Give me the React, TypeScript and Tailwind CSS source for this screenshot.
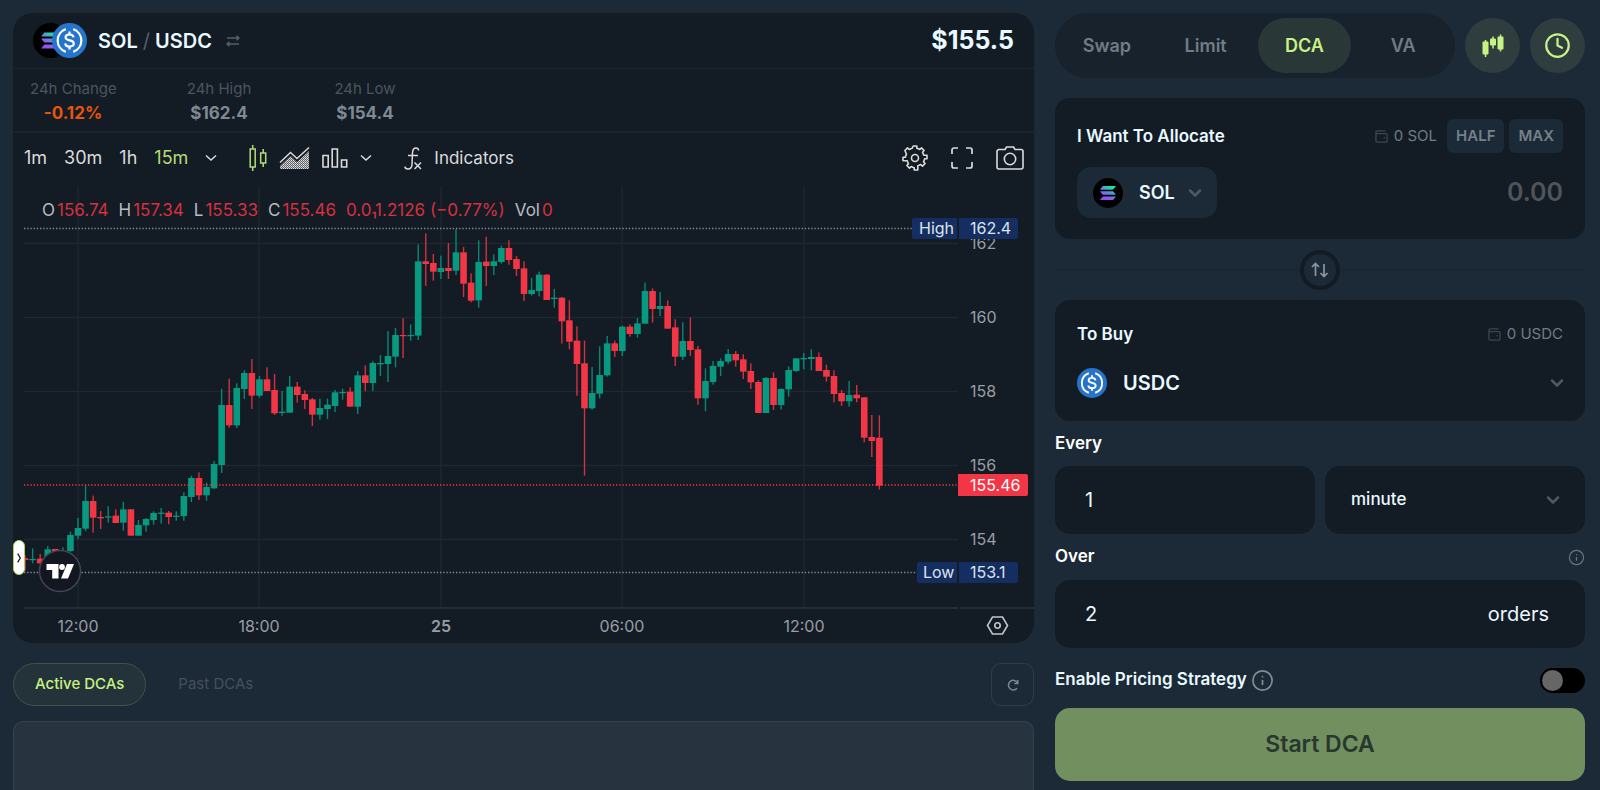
import React, { useState } from 'react'
import { ChevronDown, Clock, Info } from 'lucide-react'
import clsx from 'clsx'

// [isUp, high, bodyTop, bodyBottom, low], in thirds of a chart unit below the segment base
type Bar = [number, number, number, number, number]

interface Segment {
  start: number
  base: number
  bars: Bar[]
}

const segments: Segment[] = [
  {
    start: -7,
    base: 459,
    bars: [
      [0, 645, 655, 660, 692], [1, 625, 657, 660, 670], [0, 642, 656, 670, 672], [1, 618, 628, 656, 656],
      [0, 627, 627, 650, 650], [1, 622, 633, 650, 650], [1, 575, 585, 633, 636], [1, 534, 564, 587, 597],
      [1, 434, 483, 566, 573], [0, 467, 483, 533, 578], [0, 513, 531, 535, 567], [1, 499, 529, 532, 548],
      [0, 508, 527, 549, 549], [1, 485, 508, 548, 572], [0, 508, 508, 587, 587], [1, 540, 555, 587, 587],
      [1, 534, 537, 556, 575], [1, 514, 519, 540, 554], [1, 504, 518, 521, 551], [0, 513, 518, 531, 553],
      [1, 514, 527, 530, 542], [1, 457, 468, 528, 542], [1, 407, 414, 471, 486], [0, 397, 414, 466, 480],
      [1, 428, 441, 466, 482], [1, 363, 372, 445, 447], [1, 146, 195, 375, 399], [0, 116, 195, 256, 263],
      [1, 130, 144, 256, 264], [1, 91, 99, 147, 177], [0, 57, 99, 167, 207], [1, 108, 118, 167, 173],
      [0, 82, 118, 153, 153], [0, 102, 150, 220, 225], [1, 153, 215, 219, 227], [1, 108, 140, 218, 218],
      [0, 126, 140, 165, 188], [0, 151, 162, 180, 207], [0, 174, 178, 224, 258], [1, 176, 204, 224, 239],
      [1, 176, 194, 207, 237], [1, 150, 157, 198, 216], [1, 146, 156, 159, 179], [0, 142, 155, 200, 200],
      [1, 93, 106, 200, 222], [0, 76, 106, 129, 153], [1, 63, 69, 129, 153], [1, 45, 69, 73, 108],
    ],
  },
  {
    start: 41,
    base: 69,
    bars: [
      [1, 363, 438, 462, 516], [1, 354, 375, 440, 472], [0, 325, 375, 378, 444], [1, 343, 375, 378, 392],
      [1, 103, 154, 377, 390], [0, 70, 154, 162, 228], [0, 132, 159, 185, 212], [1, 137, 174, 186, 207],
      [0, 99, 174, 183, 207], [1, 57, 127, 182, 195], [0, 111, 127, 221, 261], [0, 190, 218, 272, 277],
      [1, 91, 156, 271, 293], [0, 80, 155, 168, 228], [1, 133, 154, 168, 195], [1, 107, 114, 156, 161],
      [0, 91, 114, 150, 164], [0, 138, 147, 177, 198], [0, 154, 175, 252, 273], [1, 204, 240, 252, 257],
      [1, 185, 194, 243, 259], [0, 193, 194, 270, 270], [1, 237, 263, 267, 293], [0, 261, 263, 334, 401],
      [0, 271, 331, 395, 418], [0, 349, 392, 462, 557], [0, 392, 460, 595, 797], [1, 471, 549, 595, 599],
      [1, 409, 495, 551, 565], [1, 378, 400, 496, 500], [0, 392, 400, 423, 441], [1, 347, 350, 423, 438],
      [0, 343, 350, 372, 380],
    ],
  },
  {
    start: 74,
    base: 219,
    bars: [
      [1, 174, 190, 222, 233], [1, 68, 93, 191, 191], [0, 85, 93, 147, 188], [1, 96, 138, 147, 168],
      [0, 121, 138, 206, 206], [0, 178, 202, 290, 318], [1, 187, 243, 290, 300], [0, 172, 243, 270, 288],
      [0, 258, 268, 415, 434], [1, 325, 363, 415, 454], [1, 303, 318, 366, 374], [1, 295, 303, 320, 348],
      [1, 267, 282, 305, 312], [0, 273, 282, 301, 320], [0, 283, 298, 335, 357], [0, 310, 333, 367, 387],
      [0, 361, 366, 459, 459], [1, 351, 354, 459, 459], [0, 337, 354, 435, 450], [1, 385, 387, 435, 449],
      [1, 319, 330, 388, 410], [1, 294, 295, 333, 336], [1, 279, 294, 298, 328], [1, 268, 291, 297, 331],
      [0, 277, 291, 333, 333], [0, 314, 330, 350, 365], [0, 331, 348, 402, 427], [0, 390, 399, 424, 438],
      [1, 363, 405, 424, 440], [0, 375, 404, 415, 427], [0, 412, 412, 533, 547], [0, 465, 531, 543, 591],
      [0, 466, 533, 677, 689],
    ],
  },
]

const priceTicks = [
  { label: '162', y: 56 },
  { label: '160', y: 130 },
  { label: '158', y: 204 },
  { label: '156', y: 278 },
  { label: '154', y: 352 },
]

const timeTicks = [
  { label: '12:00', x: 65 },
  { label: '18:00', x: 246 },
  { label: '25', x: 428, bold: true },
  { label: '06:00', x: 609 },
  { label: '12:00', x: 791 },
]

function SolIcon({ id, className }: { id: string; className?: string }) {
  return (
    <svg viewBox="0 0 32 32" className={className} aria-hidden="true">
      <defs>
        <linearGradient id={id} x1="10" y1="25" x2="20" y2="8" gradientUnits="userSpaceOnUse">
          <stop offset="0" stopColor="#a640f8" />
          <stop offset="0.35" stopColor="#8a5cf0" />
          <stop offset="0.65" stopColor="#4f9bd2" />
          <stop offset="0.85" stopColor="#1fd8ae" />
          <stop offset="1" stopColor="#14f1a0" />
        </linearGradient>
      </defs>
      <circle cx="16" cy="16" r="16" fill="#000" />
      <g fill={`url(#${id})`}>
        <path d="M10.900 8.600h12.700c.5 0 .7.500.4.800l-2.500 2.700c-.2.200-.4.300-.7.300H8.300c-.5 0-.7-.5-.4-.8l2.400-2.700c.1-.2.300-.3.600-.3z" />
        <path d="M8.300 14.100h12.500c.3 0 .5.100.7.300l2.500 2.700c.3.300.1.800-.4.800H10.900c-.3 0-.5-.1-.7-.3l-2.300-2.700c-.3-.3-.1-.8.400-.8z" />
        <path d="M10.900 19.600h12.700c.5 0 .7.500.4.800l-2.500 2.700c-.2.200-.4.300-.7.300H8.300c-.5 0-.7-.5-.4-.8l2.400-2.700c.1-.2.300-.3.600-.3z" />
      </g>
    </svg>
  )
}

function UsdcIcon({ className }: { className?: string }) {
  return (
    <svg viewBox="0 0 32 32" className={className} aria-hidden="true">
      <circle cx="16" cy="16" r="16" fill="#2775ca" />
      <g fill="none" stroke="#fff" strokeWidth="2">
        <path d="M12.600 5.600a11 11 0 0 0 0 20.800" />
        <path d="M19.400 5.600a11 11 0 0 1 0 20.800" />
        <path d="M16 7.800v2.400M16 21.800v2.400" />
        <path d="M19.700 13.200c-.2-1.800-1.600-2.700-3.700-2.700s-3.600 1-3.600 2.600c0 1.900 1.700 2.400 3.700 2.800 2.200.4 3.800 1 3.800 2.900 0 1.700-1.600 2.700-3.900 2.700s-3.800-1-3.900-2.900" />
      </g>
    </svg>
  )
}

function SwitchIcon() {
  return (
    <svg width="14" height="12" viewBox="0 0 14 12" fill="none" stroke="#56606a" strokeWidth="1.500" aria-hidden="true">
      <path d="M1 3h12M10.500.700 13 3l-2.500 2.300M13 9H1M3.500 6.700 1 9l2.500 2.300" />
    </svg>
  )
}

function WalletIcon() {
  return (
    <svg width="13" height="13" viewBox="0 0 14 14" fill="none" stroke="#3d454e" strokeWidth="1.400" aria-hidden="true">
      <path d="M1 2.300V11.500a1.500 1.500 0 0 0 1.500 1.500h9a1.500 1.500 0 0 0 1.500-1.500V5a1.200 1.200 0 0 0-1.200-1.200H2.300A1.300 1.300 0 0 1 2.300 1H11.500" />
      <path d="M10 7.500v1.600" />
    </svg>
  )
}

function ToolbarChevron() {
  return (
    <svg width="12" height="8" viewBox="0 0 12 8" fill="none" stroke="#dbdbdb" strokeWidth="1.500" aria-hidden="true">
      <path d="M1 1.500 6 6l5-4.500" />
    </svg>
  )
}

function CandlesIcon() {
  return (
    <svg width="18" height="26" viewBox="0 0 18 26" fill="none" stroke="#b5dc7a" strokeWidth="1.500" aria-hidden="true">
      <path d="M1.200 4h5v18h-5zM3.700 0v4M3.700 22v4M11.700 8h5v10h-5zM14.200 4v4M14.200 18v4" />
    </svg>
  )
}

function AreaIcon() {
  return (
    <svg width="31" height="24" viewBox="0 0 31 24" aria-hidden="true">
      <defs>
        <pattern id="area-dots" width="2" height="2" patternUnits="userSpaceOnUse">
          <rect width="2" height="2" fill="#5f6267" />
          <rect width="1" height="1" fill="#e4e4e4" />
          <rect x="1" y="1" width="1" height="1" fill="#c4c4c4" />
        </pattern>
      </defs>
      <path d="M1 20 11.500 10l6.500 6L30 5v18H1z" fill="url(#area-dots)" />
      <path d="M1 16.500 11.500 6.500l6.500 6L30 1.500" fill="none" stroke="#dbdbdb" strokeWidth="1.500" />
    </svg>
  )
}

function ColumnsIcon() {
  return (
    <svg width="26" height="20" viewBox="0 0 26 20" fill="none" stroke="#dbdbdb" strokeWidth="1.600" aria-hidden="true">
      <path d="M1 7.500h5.200V19H1zM10.200 1h5.200v18h-5.200zM19.500 12h5.200v7h-5.200z" />
    </svg>
  )
}

function FunctionIcon() {
  return (
    <svg width="18" height="23" viewBox="0 0 18 23" fill="none" stroke="#dbdbdb" strokeWidth="1.500" aria-hidden="true">
      <path d="M14.500 3.500C14.500 1.800 13.500 1 12 1 9.500 1 8.700 3 8.500 5.500L8 17.500C7.800 20.500 6.500 22 4 22 2 22 1 21.200 1 19.500M4 8.500H14M10.500 15.500l6.500 6.500M17 15.500l-6.500 6.500" />
    </svg>
  )
}

function GearIcon() {
  return (
    <svg width="26" height="26" viewBox="0 0 26 26" fill="none" stroke="#dbdbdb" strokeWidth="1.600" strokeLinejoin="round" aria-hidden="true">
      <path d="M11.200 1h3.600v2.300c1.100.3 2.100.7 3 1.200l1.700-1.600 2.600 2.600-1.600 1.700c.5.900 1 1.900 1.200 3H25v3.600h-2.300c-.3 1.100-.7 2.100-1.200 3l1.600 1.700-2.600 2.600-1.700-1.600c-.9.500-1.900 1-3 1.200V25h-3.600v-2.300c-1.100-.3-2.100-.7-3-1.200l-1.700 1.600-2.600-2.600 1.600-1.700c-.5-.9-1-1.900-1.200-3H1v-3.600h2.300c.3-1.100.7-2.100 1.200-3L2.900 5.500l2.600-2.600 1.700 1.600c.9-.5 1.900-1 3-1.200z" />
      <circle cx="13" cy="13" r="3.500" />
    </svg>
  )
}

function FullscreenIcon() {
  return (
    <svg width="22" height="22" viewBox="0 0 22 22" fill="none" stroke="#dbdbdb" strokeWidth="1.700" aria-hidden="true">
      <path d="M1 7V3a2 2 0 0 1 2-2h4M15 1h4a2 2 0 0 1 2 2v4M21 15v4a2 2 0 0 1-2 2h-4M7 21H3a2 2 0 0 1-2-2v-4" />
    </svg>
  )
}

function CameraIcon() {
  return (
    <svg width="28" height="24" viewBox="0 0 28 24" fill="none" stroke="#dbdbdb" strokeWidth="1.600" aria-hidden="true">
      <path d="M9 3.500 10.500 1h7L19 3.500h6a2 2 0 0 1 2 2V21a2 2 0 0 1-2 2H3a2 2 0 0 1-2-2V5.500a2 2 0 0 1 2-2z" />
      <circle cx="14" cy="13" r="5.700" />
    </svg>
  )
}

function SolidCandlesIcon() {
  return (
    <svg width="22" height="24" viewBox="0 0 22 24" fill="#c7f284" aria-hidden="true">
      <rect x="0.500" y="7.500" width="6" height="13" rx="1" />
      <rect x="2.800" y="6" width="1.500" height="17" />
      <rect x="8" y="4.500" width="6" height="7" rx="1" />
      <rect x="10.300" y="2.500" width="1.500" height="12" />
      <rect x="15.500" y="2.500" width="6" height="13" rx="1" />
      <rect x="17.800" y="0.500" width="1.500" height="17" />
    </svg>
  )
}

function PriceChart() {
  return (
    <svg viewBox="0 0 1021 456" className="block w-full" fontSize="16" role="img" aria-label="SOL/USDC price chart">
      <g stroke="#1f2730" strokeWidth="1.400">
        {timeTicks.map((t) => (
          <line key={t.x} x1={t.x} x2={t.x} y1="0" y2="420" />
        ))}
        {priceTicks.map((t) => (
          <line key={t.label} x1="11" x2="945" y1={t.y + 0.5} y2={t.y + 0.5} />
        ))}
      </g>
      <path d="M11 421h934M947 421h74" stroke="#262d37" strokeWidth="2" />

      <clipPath id="plot">
        <rect x="11" y="0" width="934" height="420" />
      </clipPath>
      <g clipPath="url(#plot)">
        {segments.map((s) =>
          s.bars.map(([up, high, top, bottom, low], i) => {
            const x = 65 + (s.start + i) * 7.56
            return (
              <g key={s.start + i} fill={up ? '#089981' : '#f23645'}>
                <rect x={x - 0.7} y={(s.base + high) / 3} width="1.400" height={(low - high) / 3} opacity="0.85" />
                <rect x={x - 3.3} y={(s.base + top) / 3} width="6.600" height={Math.max(1.2, (bottom - top) / 3)} />
              </g>
            )
          })
        )}
      </g>

      <g strokeWidth="1.300" strokeDasharray="1.300 1.900">
        <path d="M11 41.500h888M11 385.500h894" stroke="#8a8f98" />
        <path d="M11 298h934" stroke="#f23645" />
      </g>

      <g fill="#9a9da5">
        {priceTicks.map((t) => (
          <text key={t.label} x="957" y={t.y + 6}>
            {t.label}
          </text>
        ))}
        {timeTicks.map((t) => (
          <text key={t.x} x={t.x} y="445" textAnchor="middle" fontWeight={t.bold ? 600 : 400}>
            {t.label}
          </text>
        ))}
      </g>

      <g fill="#142e61">
        <path d="M901 31h43v21h-43a2 2 0 0 1-2-2V33a2 2 0 0 1 2-2zM946 31h57a2 2 0 0 1 2 2v17a2 2 0 0 1-2 2h-57z" />
        <path d="M906 375h38v21h-38a2 2 0 0 1-2-2v-17a2 2 0 0 1 2-2zM946 375h57a2 2 0 0 1 2 2v17a2 2 0 0 1-2 2h-57z" />
      </g>
      <path d="M945 287h68a2 2 0 0 1 2 2v18a2 2 0 0 1-2 2h-68z" fill="#f23645" />
      <g fill="#dfe3ea">
        <text x="906" y="47">High</text>
        <text x="957" y="47">162.4</text>
        <text x="910" y="391">Low</text>
        <text x="957" y="391">153.1</text>
        <text x="957" y="304" fill="#fff">155.46</text>
      </g>

      <g fill="none" stroke="#c3c5ca" strokeWidth="1.600">
        <path d="M979.500 430h10l5 8.500-5 8.500h-10l-5-8.500z" />
        <circle cx="984.500" cy="438.500" r="2.700" />
      </g>

      <circle cx="47" cy="384" r="20.500" fill="#131722" stroke="#434651" strokeWidth="1.500" />
      <g fill="#fff">
        <path d="M33.500 377h12v14.500h-6.300V383h-5.700z" />
        <circle cx="49" cy="380" r="2.900" />
        <path d="M54 377h7l-6 14.500h-7z" />
      </g>
    </svg>
  )
}

function LegendValue({ label, children }: { label: string; children: React.ReactNode }) {
  return (
    <span>
      <span className="mr-0.5 text-[#b8bbc3]">{label}</span>
      {children}
    </span>
  )
}

function Stat({ label, value, className = 'text-[#7e8a93]' }: { label: string; value: string; className?: string }) {
  return (
    <div className="w-[86px] whitespace-nowrap">
      <dt className="text-[15px] leading-6 text-[#4b555f]">{label}</dt>
      <dd className={clsx('text-[17px] leading-6 font-bold', className)}>{value}</dd>
    </div>
  )
}

function ChartCard() {
  return (
    <section className="relative overflow-hidden rounded-[20px] bg-[#131b24]">
      <header className="flex h-14 items-center border-b border-[#1d2731] px-5">
        <SolIcon id="sol-pair" className="size-[35px]" />
        <UsdcIcon className="-ml-4 size-[35px]" />
        <h1 className="ml-[11px] text-xl font-semibold text-[#e8f9ff]">
          SOL <span className="font-normal text-[#56606a]">/</span> USDC
        </h1>
        <button aria-label="Switch pair" className="ml-3.5">
          <SwitchIcon />
        </button>
        <span className="ml-auto text-[25px] font-bold text-[#e8f9ff]">$155.5</span>
      </header>

      <dl className="flex h-16 items-center gap-[60px] border-b-2 border-[#1a232d] pt-0.5 pl-[17px] text-center">
        <Stat label="24h Change" value="-0.12%" className="text-[#e8540c]" />
        <Stat label="24h High" value="$162.4" />
        <Stat label="24h Low" value="$154.4" />
      </dl>

      <div className="flex h-[54px] items-center pr-2.5 pb-1 pl-[11px] text-lg text-[#dbdbdb]">
        <div className="flex items-center gap-[17px]">
          <button>1m</button>
          <button>30m</button>
          <button>1h</button>
          <button className="text-[#b5dc7a]">15m</button>
          <button aria-label="More intervals"><ToolbarChevron /></button>
        </div>
        <div className="ml-8 flex items-center gap-3">
          <button aria-label="Candles"><CandlesIcon /></button>
          <button aria-label="Area"><AreaIcon /></button>
          <button aria-label="Columns"><ColumnsIcon /></button>
          <button aria-label="More chart types"><ToolbarChevron /></button>
        </div>
        <button className="ml-8 flex items-center gap-3 text-[17px]">
          <FunctionIcon />
          Indicators
        </button>
        <div className="ml-auto flex items-center gap-[23px]">
          <button aria-label="Chart settings"><GearIcon /></button>
          <button aria-label="Fullscreen"><FullscreenIcon /></button>
          <button aria-label="Take a snapshot"><CameraIcon /></button>
        </div>
      </div>

      <div className="relative">
        <PriceChart />
        <div className="absolute top-[11px] left-[29px] flex gap-2.5 text-[17px] leading-6 whitespace-nowrap text-[#d8303f]">
          <LegendValue label="O">156.74</LegendValue>
          <LegendValue label="H">157.34</LegendValue>
          <LegendValue label="L">155.33</LegendValue>
          <LegendValue label="C">155.46</LegendValue>
          <span>0.0₁1.2126 (−0.77%)</span>
          <LegendValue label="Vol">0</LegendValue>
        </div>
        <button
          aria-label="Show drawing tools"
          className="absolute top-[353px] left-0 flex h-[35px] w-3 items-center justify-center rounded-md border border-[#a5d35f] bg-white"
        >
          <svg width="4" height="10" viewBox="0 0 4 10" fill="none" stroke="#131722" strokeWidth="1.300" aria-hidden="true">
            <path d="M.7.700 3.300 5 .7 9.300" />
          </svg>
        </button>
      </div>
    </section>
  )
}

function Orders() {
  return (
    <>
      <div className="mt-5 flex items-center justify-between">
        <div className="flex text-[15px]">
          <button className="h-[43px] rounded-full border border-[#435443] bg-[#24323a] px-[21px] font-medium text-[#c7f284]">
            Active DCAs
          </button>
          <button className="h-[43px] px-8 text-[#45505b]">Past DCAs</button>
        </div>
        <button
          aria-label="Refresh"
          className="flex size-[43px] items-center justify-center rounded-[10px] border border-[#303c49]"
        >
          <svg width="12" height="12" viewBox="0 0 12 12" fill="none" stroke="#7c868f" strokeWidth="1.500" aria-hidden="true">
            <path d="M10 9.200A4.800 4.800 0 1 1 10.300 3.500M10.800 1v3.500H7.300" />
          </svg>
        </button>
      </div>
      <div className="mt-[15px] flex-1 rounded-t-[10px] border border-b-0 border-[#354350] bg-[#27343f]" />
    </>
  )
}

const tabs = ['Swap', 'Limit', 'DCA', 'VA']

function DcaPanel() {
  const [tab, setTab] = useState('DCA')

  return (
    <aside className="flex flex-col pb-2">
      <div className="flex items-center gap-2.5">
        <nav className="flex h-[65px] flex-1 gap-[5px] rounded-full bg-[#18222d] p-[5px]">
          {tabs.map((t) => (
            <button
              key={t}
              onClick={() => setTab(t)}
              className={clsx(
                'flex-1 rounded-full text-lg font-semibold',
                t === tab ? 'bg-[#293736] text-[#c7f284]' : 'text-[#707b85]'
              )}
            >
              {t}
            </button>
          ))}
        </nav>
        <button aria-label="Chart" className="flex size-[55px] items-center justify-center rounded-full bg-[#2f3d3e]">
          <SolidCandlesIcon />
        </button>
        <button aria-label="History" className="flex size-[55px] items-center justify-center rounded-full bg-[#2f3d3e] text-[#c7f284]">
          <Clock size={27} strokeWidth={2} />
        </button>
      </div>

      <section className="mt-5 rounded-[15px] bg-[#131b24] px-[22px] py-[21px]">
        <div className="flex items-center">
          <label htmlFor="allocate" className="text-[17px] leading-7 font-semibold text-[#e8f9ff]">
            I Want To Allocate
          </label>
          <span className="ml-auto flex items-center gap-1.5 text-[15px] text-[#707b85]">
            <WalletIcon />0 SOL
          </span>
          <button className="ml-2.5 h-[34px] rounded-md bg-[#1c2936] px-[9px] text-[15px] font-semibold text-[#74808a]">HALF</button>
          <button className="ml-[5px] h-[34px] rounded-md bg-[#1c2936] px-[9px] text-[15px] font-semibold text-[#74808a]">MAX</button>
        </div>
        <div className="mt-3.5 flex items-center justify-between">
          <button className="flex h-[51px] shrink-0 items-center rounded-[14px] bg-[#1c2936] px-4 text-lg font-semibold text-[#e8f9ff]">
            <SolIcon id="sol-select" className="size-[30px]" />
            <span className="ml-4">SOL</span>
            <ChevronDown size={20} strokeWidth={3} className="ml-2.5 -mr-1 text-[#4f5963]" />
          </button>
          <input
            id="allocate"
            placeholder="0.00"
            className="w-full min-w-0 bg-transparent text-right text-[25px] font-semibold outline-none placeholder:text-[#4f545b]"
          />
        </div>
      </section>

      <div className="flex h-[61px] items-center">
        <div className="h-px flex-1 bg-[#192430]" />
        <button aria-label="Switch tokens" className="flex size-10 items-center justify-center rounded-full border-4 border-[#131b24]">
          <svg width="18" height="16" viewBox="0 0 18 16" fill="none" stroke="#8b969f" strokeWidth="1.700" aria-hidden="true">
            <path d="M4.500 14V1.500M1 5l3.500-3.500L8 5M13 2v12.500M9.500 11l3.500 3.500 3.500-3.500" />
          </svg>
        </button>
        <div className="h-px flex-1 bg-[#192430]" />
      </div>

      <section className="rounded-[15px] bg-[#131b24] px-[22px] pt-5 pb-[23px] text-[#e8f9ff]">
        <div className="flex items-center justify-between">
          <span className="text-[17px] leading-7 font-semibold">To Buy</span>
          <span className="flex items-center gap-1.5 text-[15px] text-[#707b85]">
            <WalletIcon />0 USDC
          </span>
        </div>
        <button className="mt-5 flex h-[30px] w-full items-center">
          <UsdcIcon className="size-[30px]" />
          <span className="ml-4 text-xl font-semibold">USDC</span>
          <ChevronDown size={20} strokeWidth={3} className="-mr-1 ml-auto text-[#4f5963]" />
        </button>
      </section>

      <label htmlFor="every" className="flex h-[45px] items-center text-[17px] font-semibold text-white">
        Every
      </label>
      <div className="grid grid-cols-2 gap-2.5 text-[#e8f9ff]">
        <input id="every" defaultValue="1" className="h-[68px] min-w-0 rounded-[15px] bg-[#131b24] px-[30px] text-xl outline-none" />
        <div className="relative">
          <select
            aria-label="Interval"
            className="h-[68px] w-full appearance-none rounded-[15px] bg-[#131b24] px-[26px] text-[17px] font-medium outline-none"
          >
            <option>minute</option>
          </select>
          <ChevronDown size={20} strokeWidth={3} className="pointer-events-none absolute top-6 right-[22px] text-[#4f5963]" />
        </div>
      </div>

      <div className="flex h-[46px] items-center justify-between">
        <label htmlFor="over" className="text-[17px] font-semibold text-white">
          Over
        </label>
        <Info size={17} strokeWidth={1.8} className="text-[#68737d]" />
      </div>
      <div className="flex h-[68px] items-center rounded-[15px] bg-[#131b24] pr-9 text-xl text-[#e8f9ff]">
        <input id="over" defaultValue="2" className="h-full min-w-0 flex-1 bg-transparent pl-[30px] outline-none" />
        <span>orders</span>
      </div>

      <div className="flex h-[60px] items-center pt-1">
        <label htmlFor="pricing" className="text-[17px] font-semibold text-[#e8f9ff]">
          Enable Pricing Strategy
        </label>
        <Info size={23} strokeWidth={1.8} className="ml-1 text-[#838c94]" />
        <input
          id="pricing"
          type="checkbox"
          className="ml-auto h-[25px] w-[45px] appearance-none rounded-full bg-black p-[2px] before:block before:size-[21px] before:rounded-full before:bg-[#666] checked:before:ml-auto"
        />
      </div>
      <button className="h-[73px] rounded-[15px] bg-[#728f5f] text-[23px] font-semibold text-[#28372f]">Start DCA</button>
    </aside>
  )
}

export default function App() {
  return (
    <main className="grid min-h-screen grid-cols-[1021fr_530fr] gap-[21px] bg-[#1c2936] pt-[13px] pr-[15px] pl-[13px] font-['Inter',sans-serif]">
      <div className="flex min-w-0 flex-col">
        <ChartCard />
        <Orders />
      </div>
      <DcaPanel />
    </main>
  )
}
